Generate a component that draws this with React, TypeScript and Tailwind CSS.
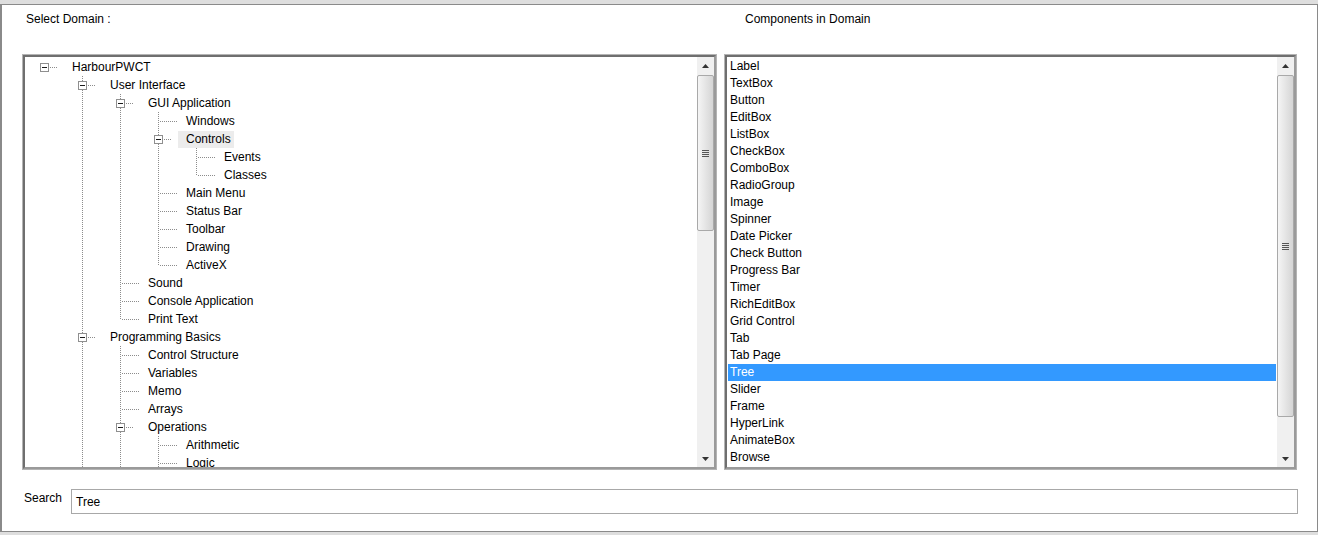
import React from 'react';

type Node = { label: string; level: number; kids?: boolean };

const tree: Node[] = [
  { label: 'HarbourPWCT', level: 0, kids: true },
  { label: 'User Interface', level: 1, kids: true },
  { label: 'GUI Application', level: 2, kids: true },
  { label: 'Windows', level: 3 },
  { label: 'Controls', level: 3, kids: true },
  { label: 'Events', level: 4 },
  { label: 'Classes', level: 4 },
  { label: 'Main Menu', level: 3 },
  { label: 'Status Bar', level: 3 },
  { label: 'Toolbar', level: 3 },
  { label: 'Drawing', level: 3 },
  { label: 'ActiveX', level: 3 },
  { label: 'Sound', level: 2 },
  { label: 'Console Application', level: 2 },
  { label: 'Print Text', level: 2 },
  { label: 'Programming Basics', level: 1, kids: true },
  { label: 'Control Structure', level: 2 },
  { label: 'Variables', level: 2 },
  { label: 'Memo', level: 2 },
  { label: 'Arrays', level: 2 },
  { label: 'Operations', level: 2, kids: true },
  { label: 'Arithmetic', level: 3 },
  { label: 'Logic', level: 3 },
  { label: 'Comparison', level: 3 },
  { label: 'Strings', level: 2 },
  { label: 'Database', level: 1 },
];

const components = [
  'Label', 'TextBox', 'Button', 'EditBox', 'ListBox', 'CheckBox', 'ComboBox', 'RadioGroup',
  'Image', 'Spinner', 'Date Picker', 'Check Button', 'Progress Bar', 'Timer', 'RichEditBox',
  'Grid Control', 'Tab', 'Tab Page', 'Tree', 'Slider', 'Frame', 'HyperLink', 'AnimateBox', 'Browse',
];

// does a sibling at `level` come after row i (before the branch closes)?
function hasLater(i: number, level: number) {
  for (let j = i + 1; j < tree.length; j++) {
    if (tree[j].level < level) return false;
    if (tree[j].level === level) return true;
  }
  return false;
}

const DOT = '#8c8c8c';

function TreeRow({ node, index }: { node: Node; index: number }) {
  const L = node.level;
  const col = (k: number) => 19 + 38 * k; // pixel column of the connector
  const vx = (k: number) => col(k) + 0.5;
  const textX = 47 + 38 * L;
  const mid = 9.5;
  const lines: React.ReactNode[] = [];
  for (let k = 1; k < L; k++) {
    if (hasLater(index, k)) {
      lines.push(<line key={'v' + k} x1={vx(k)} y1={0} x2={vx(k)} y2={18} stroke={DOT} strokeDasharray="1 1" />);
    }
  }
  if (L >= 1) {
    lines.push(
      <line key="up" x1={vx(L)} y1={0} x2={vx(L)} y2={hasLater(index, L) ? 18 : 10} stroke={DOT} strokeDasharray="1 1" />
    );
  }
  const end = node.kids ? col(L) + 14 : col(L) + 19;
  lines.push(<line key="h" x1={col(L) + 2} y1={mid} x2={end} y2={mid} stroke={DOT} strokeDasharray="1 1" />);
  const selected = node.label === 'Controls';
  return (
    <div className="relative flex h-[18px] items-center">
      <svg width={textX} height={18} className="shrink-0">
        {lines}
        {node.kids && (
          <g>
            <rect x={vx(L) - 4} y={mid - 4} width={8} height={8} fill="#fff" stroke="#8f8f8f" />
            <line x1={col(L) - 2} y1={mid} x2={col(L) + 3} y2={mid} stroke="#1a1a1a" />
          </g>
        )}
      </svg>
      <span
        className={
          'ml-[-8px] h-[17px] whitespace-nowrap pl-[8px] pr-[3px] leading-[17px] ' +
          (selected ? 'bg-[#ececec]' : '')
        }
      >
        {node.label}
      </span>
    </div>
  );
}

function Arrow({ up }: { up?: boolean }) {
  return (
    <div className="flex h-[17px] items-center justify-center">
      <svg width="7" height="4" viewBox="0 0 7 4">
        {up ? <path d="M3.5 0 L7 4 L0 4 Z" fill="#333" /> : <path d="M0 0 L7 0 L3.5 4 Z" fill="#333" />}
      </svg>
    </div>
  );
}

function ScrollBar({ thumb }: { thumb: number }) {
  return (
    <div className="flex w-[17px] shrink-0 flex-col bg-[#f0f0f0]">
      <Arrow up />
      <div className="flex flex-1 flex-col pt-[1px]">
        <div
          className="flex items-center justify-center rounded-[2px] border border-[#a9a9a9] bg-linear-to-r from-[#f5f5f5] to-[#d5d5d5]"
          style={{ height: thumb }}
        >
          <div className="flex flex-col gap-[1px]">
            <div className="h-px w-[7px] bg-[#555]" />
            <div className="h-px w-[7px] bg-[#555]" />
            <div className="h-px w-[7px] bg-[#555]" />
            <div className="h-px w-[7px] bg-[#555]" />
          </div>
        </div>
      </div>
      <Arrow />
    </div>
  );
}

function Frame({ children, className }: { children: React.ReactNode; className: string }) {
  return (
    <div className={'h-[416px] border border-[#b4b4b4] ' + className}>
      <div className="flex h-full border-2 border-t-[#6f6f6f] border-l-[#6f6f6f] border-r-[#9a9a9a] border-b-[#9a9a9a] bg-white">
        {children}
      </div>
    </div>
  );
}

export default function App() {
  return (
    <div className="h-[535px] w-[1318px] bg-[#dedede] pt-[4px] font-['Liberation_Sans',Arial,sans-serif] text-[12px] text-black">
      <div className="h-[528px] border-t border-r border-b border-l-2 border-[#8a8a8a] bg-white">
        <div className="mt-[7px] flex h-[14px] leading-[14px]">
          <div className="w-[718px] pl-[24px]">Select Domain :</div>
          <div className="pl-[25px]">Components in Domain</div>
        </div>
        <div className="mt-[28px] flex gap-[7px] pl-[20px]">
          <Frame className="w-[695px]">
            <div className="flex-1 overflow-hidden pt-[1px]">
              {tree.map((n, i) => (
                <TreeRow key={n.label} node={n} index={i} />
              ))}
            </div>
            <ScrollBar thumb={156} />
          </Frame>
          <Frame className="w-[573px]">
            <div className="flex-1 overflow-hidden pt-[1px]">
              {components.map((c) => (
                <div
                  key={c}
                  className={
                    'mx-[1px] h-[17px] pl-[2px] leading-[17px] ' +
                    (c === 'Tree' ? 'bg-[#3399ff] text-white' : '')
                  }
                >
                  {c}
                </div>
              ))}
            </div>
            <ScrollBar thumb={342} />
          </Frame>
        </div>
        <div className="mt-[19px] flex items-start">
          <div className="mt-[2px] w-[69px] pl-[22px] leading-[14px]">Search</div>
          <div className="flex h-[25px] w-[1227px] items-center border border-[#a8a8a8] pl-[4px]">Tree</div>
        </div>
      </div>
    </div>
  );
}
